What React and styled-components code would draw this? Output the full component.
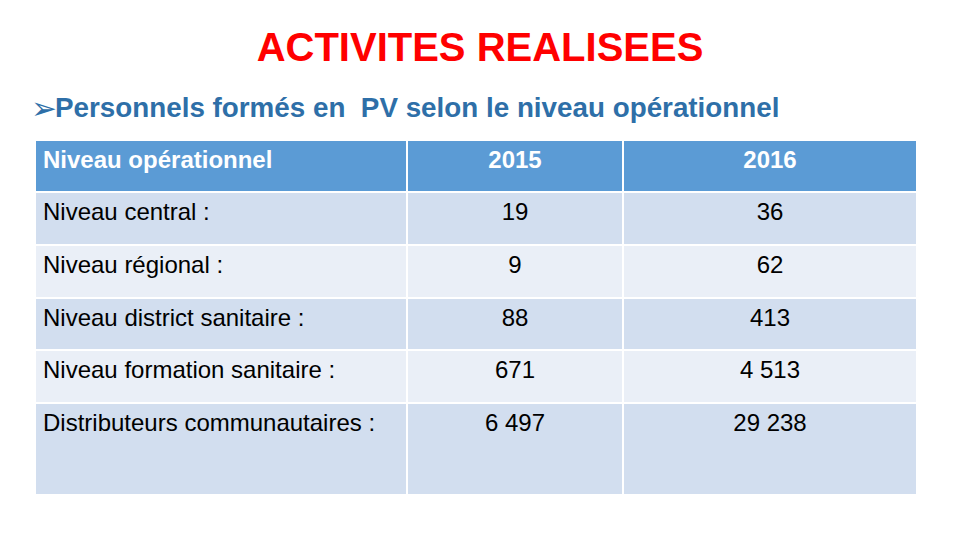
import React from 'react';
import styled, { createGlobalStyle } from 'styled-components';

const GlobalStyle = createGlobalStyle`
  body {
    margin: 0;
    background: #ffffff;
    font-family: "Liberation Sans", Arial, sans-serif;
  }
`;

const rows = [
  { label: 'Niveau central :', a: '19', b: '36', h: 51 },
  { label: 'Niveau régional :', a: '9', b: '62', h: 51 },
  { label: 'Niveau district sanitaire :', a: '88', b: '413', h: 50 },
  { label: 'Niveau formation sanitaire :', a: '671', b: '4 513', h: 51 },
  { label: 'Distributeurs communautaires :', a: '6 497', b: '29 238', h: 90 },
];

const App = () => (
  <Slide>
    <GlobalStyle />
    <Title>ACTIVITES REALISEES</Title>
    <Subtitle>
      <Arrow>➢</Arrow>Personnels formés en&nbsp; PV selon le niveau opérationnel
    </Subtitle>
    <Table>
      <colgroup>
        <col style={{ width: 370 }} />
        <col style={{ width: 214 }} />
        <col style={{ width: 292 }} />
      </colgroup>
      <thead>
        <tr>
          <TH>Niveau opérationnel</TH>
          <TH center>2015</TH>
          <TH center>2016</TH>
        </tr>
      </thead>
      <tbody>
        {rows.map((r, i) => (
          <Row key={r.label} odd={i % 2 === 0} style={{ height: r.h }}>
            <TD>{r.label}</TD>
            <TD center>{r.a}</TD>
            <TD center>{r.b}</TD>
          </Row>
        ))}
      </tbody>
    </Table>
  </Slide>
);

const Slide = styled.div`
  width: 960px;
  height: 540px;
  overflow: hidden;
  padding-top: 24px;
  box-sizing: border-box;
`;

const Title = styled.h1`
  margin: 0;
  text-align: center;
  color: #ff0000;
  font-size: 40px;
  font-weight: 700;
  line-height: 46px;
`;

const Subtitle = styled.h2`
  margin: 22px 0 0 31px;
  color: #2e6fa8;
  font-size: 27.8px;
  font-weight: 700;
  line-height: 32px;
  display: flex;
  align-items: center;
`;

const Arrow = styled.span`
  font-family: "DejaVu Sans", sans-serif;
  font-size: 31px;
  font-weight: 400;
  line-height: 32px;
  margin-right: -2px;
`;

const Table = styled.table`
  margin: 15px 0 0 34px;
  width: 882px;
  border-collapse: separate;
  border-spacing: 2px;
  table-layout: fixed;
  font-size: 24px;
`;

const TH = styled.th`
  height: 50px;
  background: #5b9bd5;
  color: #ffffff;
  font-weight: 700;
  text-align: ${p => (p.center ? 'center' : 'left')};
  vertical-align: top;
  padding: 5px 7px 0;
  line-height: 28px;
  box-sizing: border-box;
`;

const Row = styled.tr`
  background: ${p => (p.odd ? '#d2deef' : '#eaeff7')};
`;

const TD = styled.td`
  color: #000000;
  text-align: ${p => (p.center ? 'center' : 'left')};
  vertical-align: top;
  padding: 5px 7px 0;
  line-height: 28px;
  box-sizing: border-box;
`;

export default App;
